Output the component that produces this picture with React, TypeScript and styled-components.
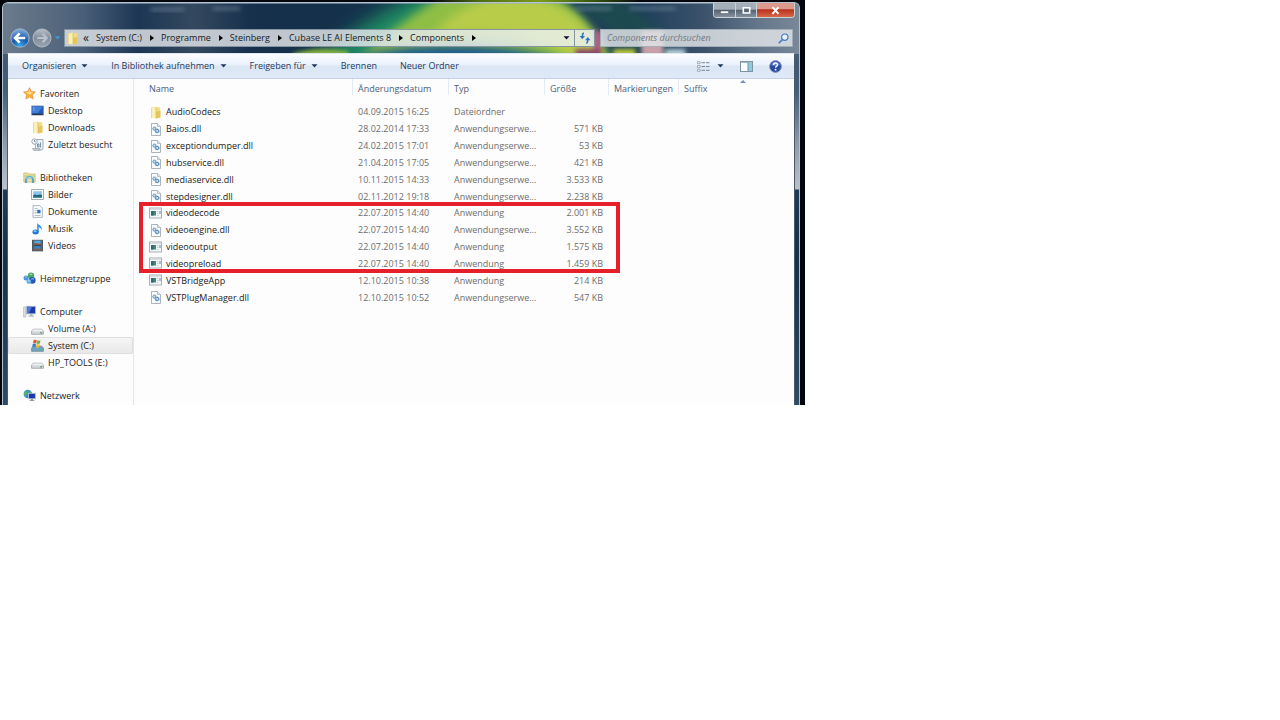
import React from "react";
import styled, { createGlobalStyle, css } from "styled-components";

const GlobalStyle = createGlobalStyle`
  *, *::before, *::after { box-sizing: border-box; }
  body {
    margin: 0;
    background: #fff;
    font-family: "Open Sans", "Noto Sans", sans-serif;
    font-size: 9px;
    line-height: 14px;
    color: #1b1b1b;
  }
  button, input { font: inherit; color: inherit; }
  button { border: 0; padding: 0; background: none; cursor: pointer; }
  svg { display: block; flex: none; }
`;

/* ---------- window frame ---------- */

const Desktop = styled.main`
  width: 100%;
  max-width: 805px;
  padding: 2px 5px 0 2px;
  background: linear-gradient(90deg, #05070c 0 430px, #4d6e12 480px, #7d9a1c 540px, #3c5a10 590px, #05070c 640px) top / 100% 2px no-repeat, #03060c;
`;

const Frame = styled.section`
  position: relative;
  padding: 0 4px;
  border: 1px solid #b4c2cf;
  border-bottom: 0;
  border-radius: 6px 6px 0 0;
  overflow: hidden;
  background: linear-gradient(
    180deg,
    #5d7186 0,
    #3f5975 60px,
    #46607c 90px,
    #8c9aaa 140px,
    #b9c2cc 186px,
    #1d3a58 187px,
    #17304c 260px,
    #2d4c68 403px
  );
`;

const Glass = styled.svg`
  position: absolute;
  top: 0;
  left: 0;
  width: 100%;
  height: 51px;
`;

const TitleBar = styled.header`
  position: relative;
  display: flex;
  justify-content: flex-end;
  align-items: flex-start;
  height: 26px;
`;

const WindowControls = styled.div`
  display: flex;
  border: 1px solid #c9d1d9;
  border-top: 0;
  border-radius: 0 0 4px 4px;
  overflow: hidden;
`;

const ControlButton = styled.button<{ $close?: boolean }>`
  display: grid;
  place-items: center;
  width: ${(p) => (p.$close ? 38 : 21)}px;
  height: 14px;
  background: linear-gradient(#a3aeb9 0 45%, #53616f 50%, #8792a0);
  & + & { border-left: 1px solid #c9d1d9; }
  ${(p) =>
    p.$close &&
    css`
      background: linear-gradient(#dc9a8c 0 42%, #b8321c 48%, #d8694a);
    `}
`;

const NavRow = styled.div`
  position: relative;
  display: flex;
  align-items: center;
  height: 18px;
  margin-bottom: 6px;
  padding: 0 2px 0 3px;
`;

const HistoryButtons = styled.div`
  display: flex;
  align-items: center;
  gap: 2px;
  width: 54px;
`;

const IconButton = styled.button`
  display: grid;
  place-items: center;
`;

const AddressBar = styled.div`
  display: flex;
  flex: 1;
  align-items: center;
  height: 18px;
  margin-right: 5px;
  border: 1px solid #8593a2;
  background: linear-gradient(90deg, rgba(218, 222, 226, 0.86) 30%, rgba(240, 244, 248, 0.8));
`;

const FolderSlot = styled.span`
  width: 18px;
  padding-left: 1px;
`;

const Crumbs = styled.ol`
  display: flex;
  flex: 1;
  align-items: center;
  margin: 0;
  padding: 0;
  list-style: none;
`;

const Crumb = styled.li`
  display: flex;
  align-items: center;
  white-space: nowrap;
`;

const CrumbLink = styled.a`
  color: #17191c;
  text-decoration: none;
`;

const CrumbArrow = styled.svg`
  margin: 0 7px 0 8px;
`;

const Overflow = styled.span`
  width: 13px;
  font-size: 12px;
`;

const AddressAction = styled(IconButton)<{ $divided?: boolean }>`
  width: ${(p) => (p.$divided ? 20 : 16)}px;
  height: 16px;
  ${(p) => p.$divided && "border-left: 1px solid #8593a2;"}
`;

const SearchBox = styled.form`
  display: flex;
  align-items: center;
  width: 193px;
  height: 18px;
  padding: 0 3px 0 6px;
  border: 1px solid #a3aeb8;
  background: rgba(224, 228, 231, 0.84);
`;

const SearchInput = styled.input`
  flex: 1;
  min-width: 0;
  padding: 0;
  border: 0;
  outline: 0;
  background: none;
  font-style: italic;
  &::placeholder { color: #72787e; opacity: 1; }
`;

/* ---------- client area ---------- */

const Client = styled.div`
  position: relative;
  border: 1px solid #4a5a6b;
  border-top-color: #dfe8f0;
  border-bottom: 0;
  background: #fdfdfd;
`;

const Toolbar = styled.div`
  display: flex;
  align-items: center;
  height: 25px;
  padding: 0 12px 0 14px;
  border-bottom: 1px solid #c3cfe2;
  background: linear-gradient(#fbfdff, #eaf1fb 45%, #dbe6f5 50%, #dfe9f7);
  color: #1e395b;
`;

const ToolbarButton = styled.button`
  display: flex;
  align-items: center;
  gap: 5px;
  margin-right: 23px;
  white-space: nowrap;
`;

const ToolbarIcons = styled.div`
  display: flex;
  align-items: center;
  gap: 16px;
  margin-left: auto;
`;

const ViewGroup = styled.div`
  display: flex;
  align-items: center;
  gap: 7px;
`;

const Body = styled.div`
  display: grid;
  grid-template-columns: 126px minmax(0, 1fr);
  min-height: 326px;
`;

const Sidebar = styled.nav`
  display: flex;
  flex-direction: column;
  gap: 16px;
  height: 326px;
  padding-top: 6px;
  border-right: 1px solid #dfe8f2;
  overflow: hidden;
`;

const NavGroup = styled.ul`
  margin: 0;
  padding: 0;
  list-style: none;
`;

const NavLink = styled.a<{ $child?: boolean; $selected?: boolean }>`
  display: flex;
  align-items: center;
  gap: 4px;
  height: 17px;
  padding-left: ${(p) => (p.$child ? 23 : 15)}px;
  color: #1b1b1b;
  text-decoration: none;
  white-space: nowrap;
  ${(p) =>
    p.$selected &&
    css`
      border-radius: 2px;
      background: linear-gradient(#f6f6f6, #e8e8e8);
      box-shadow: inset 0 0 0 1px #dfdfdf;
    `}
`;

const FilePane = styled.div`
  position: relative;
`;

const FileTable = styled.table`
  width: 100%;
  height: 227px;
  table-layout: fixed;
  border-collapse: collapse;
  white-space: nowrap;
`;

const HeadRow = styled.tr`
  height: 25px;
`;

const HeadCell = styled.th`
  position: relative;
  padding: 0;
  vertical-align: top;
  text-align: left;
  font-weight: 400;
  color: #4c607a;
`;

const HeadLabel = styled.span<{ $first?: boolean; $last?: boolean }>`
  display: block;
  height: 16px;
  padding: 3px 0 0 ${(p) => (p.$first ? 15 : 5)}px;
  border-right: ${(p) => (p.$last ? 0 : 1)}px solid #e3eaf2;
`;

const SortMark = styled.svg`
  position: absolute;
  top: 1px;
  left: 61px;
`;

const Cell = styled.td<{ $numeric?: boolean }>`
  padding: 0 ${(p) => (p.$numeric ? 6 : 4)}px 0 5px;
  text-align: ${(p) => (p.$numeric ? "right" : "left")};
  color: #6d6d6d;
`;

const NameCell = styled(Cell)`
  padding-left: 15px;
  color: #1b1b1b;
`;

const FileName = styled.span`
  display: flex;
  align-items: center;
  gap: 4px;
`;

const Highlight = styled.div`
  position: absolute;
  top: 123px;
  left: 5px;
  width: 481px;
  height: 71px;
  border: 4px solid #e6202a;
  pointer-events: none;
`;

/* ---------- icons ---------- */

const Caret = ({ color = "#1e395b" }: { color?: string }) => (
  <svg width="7" height="4" viewBox="0 0 7 4" aria-hidden="true">
    <path d="M.5.200h6L3.500 3.600z" fill={color} />
  </svg>
);

const FolderIcon = () => (
  <svg width="13" height="13" viewBox="0 0 13 13" aria-hidden="true">
    <path d="M2 1.500 6 .5v11L2 12.300z" fill="#efd77e" />
    <path d="M6 1.300h5.200v10.500H5z" fill="#f3dd86" />
    <path d="M2.800 1.800 7 .6v11.900l-4.200-.8z" fill="#fbf0b8" />
    <path d="M7.200 5.800 11.500 4.500v7L7.200 12.500z" fill="#e6c75e" />
    <path d="M7 1v11.500" stroke="#d0b050" strokeWidth=".6" />
  </svg>
);

const DllIcon = () => (
  <svg width="13" height="13" viewBox="0 0 13 13" aria-hidden="true">
    <path d="M2.500.5h6l3 3v9h-9z" fill="#fbfcfd" stroke="#a3abb2" strokeWidth=".9" />
    <path d="M8.500.5v3h3" fill="#e4e8ec" stroke="#a3abb2" strokeWidth=".7" />
    <circle cx="5.400" cy="5.600" r="1.500" fill="#cfe2f2" stroke="#5f95c2" strokeWidth="1.200" strokeDasharray="1 .3" />
    <circle cx="8.200" cy="8" r="1.700" fill="#cfe2f2" stroke="#4b84b8" strokeWidth="1.300" strokeDasharray="1.100 .3" />
  </svg>
);

const ExeIcon = () => (
  <svg width="13" height="13" viewBox="0 0 13 13" aria-hidden="true">
    <rect x=".5" y="1" width="12" height="10" fill="#f4f6f7" stroke="#a0a8af" strokeWidth=".9" />
    <path d="M1 2.200h11" stroke="#cfd6dc" />
    <rect x="2" y="4" width="5" height="4.500" fill="#3f8a78" />
    <path d="M2 4h2.500v4.500H2z" fill="#2d6a78" />
    <path d="M8 4.500h1.500M8 6.500h1.500M8 8.500h1.500" stroke="#b3c0ca" strokeWidth=".8" />
    <path d="M11 4v3" stroke="#4c7598" strokeWidth=".9" />
  </svg>
);

const StarIcon = () => (
  <svg width="13" height="13" viewBox="0 0 13 13" aria-hidden="true">
    <path d="m6.500.7 1.700 3.900 4.200.4-3.200 2.800 1 4.200-3.700-2.200L2.800 12l1-4.200L.6 5l4.200-.4z" fill="#fbb034" stroke="#e08f3a" strokeWidth=".8" />
    <path d="m6.500 2.300 1.200 3 3 .3-4.200 2-3.800-2 2.700-.3z" fill="#ffe08a" />
  </svg>
);

const DesktopIcon = () => (
  <svg width="13" height="13" viewBox="0 0 13 13" aria-hidden="true">
    <rect x=".8" y="2" width="11.500" height="9" fill="#2458b8" stroke="#6e7f96" strokeWidth=".8" />
    <path d="M1.200 2.500h10.600L7 9H1.200z" fill="#3f7fd8" />
    <path d="M1.200 10.300h10.600" stroke="#2a3752" strokeWidth="1.200" />
    <path d="M2 4h1.500M2 6h1.500" stroke="#a9cdf5" strokeWidth=".8" />
  </svg>
);

const RecentIcon = () => (
  <svg width="13" height="13" viewBox="0 0 13 13" aria-hidden="true">
    <path d="M4 1.500h8v8.500c0 1.500-1 2-2 2H3c1 0 1.500-.8 1.500-2z" fill="#eef2f5" stroke="#8c98a3" strokeWidth=".8" />
    <circle cx="3.500" cy="3.500" r="2.700" fill="#f7f9fa" stroke="#8896a3" strokeWidth=".8" />
    <path d="M3.500 2v1.700h1.200M6.500 6H8v3H6.500zM9.500 4.500v5" fill="none" stroke="#5d7c9b" strokeWidth=".8" />
    <path d="M1.500 10.500h7.500v1.700H2.500z" fill="#cbd4dc" stroke="#8c98a3" strokeWidth=".6" />
  </svg>
);

const LibraryIcon = () => (
  <svg width="13" height="13" viewBox="0 0 13 13" aria-hidden="true">
    <path d="M.8 2h4l1 1h6.400v8H.8z" fill="#f3e09a" stroke="#c9b066" strokeWidth=".7" />
    <path d="M1.300 4.300h10.500v2H1.300z" fill="#b5d79c" />
    <path d="M3 12V9a3.500 2.800 0 0 1 7 0v3" fill="none" stroke="#56a5cf" strokeWidth="2.200" />
    <path d="M3.200 8.300A3.200 2.600 0 0 1 9 7.600" fill="none" stroke="#cdeafa" strokeWidth=".8" />
  </svg>
);

const PictureIcon = () => (
  <svg width="13" height="13" viewBox="0 0 13 13" aria-hidden="true">
    <rect x=".6" y="1.600" width="11.800" height="9.800" fill="#fff" stroke="#8a98a6" strokeWidth=".8" />
    <rect x="2.200" y="3.200" width="8.800" height="6.700" fill="#8cc6ea" />
    <path d="M2.200 7.500c2-2 3 0 4.500-.5s2.500-1 4.300 0v2.900H2.200z" fill="#23617a" />
    <path d="M2.200 8.800h8.800v1.100H2.200z" fill="#3f95a5" />
  </svg>
);

const DocumentIcon = () => (
  <svg width="13" height="13" viewBox="0 0 13 13" aria-hidden="true">
    <path d="M2 .6h6.800l2.500 2.500v9.300H2z" fill="#fbfcfe" stroke="#9aa4ae" strokeWidth=".8" />
    <path d="M3.600 3.500h3M3.600 5.500h2M3.600 10.500h6" stroke="#9fb0c2" strokeWidth=".8" />
    <rect x="6.200" y="4.800" width="3.300" height="3.500" fill="#2f6fb8" />
    <path d="M3.600 7.800h2" stroke="#7f93a8" />
  </svg>
);

const MusicIcon = () => (
  <svg width="13" height="13" viewBox="0 0 13 13" aria-hidden="true">
    <path d="M6.200.6c.5 2.700 5.400 3 4.600 7.400-.6-1.600-1.700-2.500-3.100-2.800V10H6.200z" fill="#2d8fe0" />
    <ellipse cx="4.600" cy="9.900" rx="3.200" ry="2.500" fill="#2479d2" />
    <ellipse cx="4.100" cy="9.200" rx="1.500" ry=".9" fill="#8cc8f6" />
  </svg>
);

const VideoIcon = () => (
  <svg width="13" height="13" viewBox="0 0 13 13" aria-hidden="true">
    <rect x="1" y=".8" width="11" height="11.500" fill="#37424d" />
    <rect x="3.200" y="1.500" width="6.600" height="4.500" fill="#5aa6d6" />
    <rect x="3.200" y="7" width="6.600" height="4.500" fill="#3d83b8" />
    <path d="M3.200 4.500c2-1.500 4 1 6.600-.5v2H3.200zM3.200 10c2-1.500 4 1 6.600-.5v2H3.200z" fill="#8a5a44" />
    <path d="M2.100 1.500v10.500M10.900 1.500v10.500" stroke="#b8c2ca" strokeWidth=".9" strokeDasharray="1 1" />
  </svg>
);

const HomegroupIcon = () => (
  <svg width="13" height="13" viewBox="0 0 13 13" aria-hidden="true">
    <circle cx="3" cy="6" r="2.500" fill="#4d94dc" />
    <circle cx="8" cy="3.800" r="3.200" fill="#49a860" />
    <circle cx="9.300" cy="8.400" r="3.300" fill="#2756b5" />
    <circle cx="5.800" cy="9.600" r="2.400" fill="#5fb3e8" />
    <path d="M6.700 2.500a2 1.500 0 0 1 2.500 0M8.300 7.100a2 1.500 0 0 1 2.500 0M2 5h1.500M5 8.800h1.500" stroke="#cfe8fb" strokeWidth=".9" fill="none" />
  </svg>
);

const ComputerIcon = () => (
  <svg width="13" height="13" viewBox="0 0 13 13" aria-hidden="true">
    <path d="M.6 2h2.200v10H.6z" fill="#dde2e7" stroke="#a3acb5" strokeWidth=".6" />
    <rect x="3.500" y="1.300" width="9" height="7.500" fill="#1b38a8" stroke="#b3bdc8" strokeWidth=".9" />
    <path d="M4 1.800h5L6 8.300H4z" fill="#4b79e0" />
    <path d="M7 9h2.500v1.500H11v1.200H5.500v-1.200H7z" fill="#b3bdc6" />
  </svg>
);

const DriveShape = () => (
  <>
    <path d="M2.200 7.200h8.600l1.600 2v3.100H.6V9.200z" fill="#d3d7db" stroke="#8d959c" strokeWidth=".7" />
    <path d="M2.200 7.500h8.600l1.200 1.700H1z" fill="#f1f3f4" />
    <path d="M9.200 10.800h1.900" stroke="#35a64b" strokeWidth="1.200" />
  </>
);

const DriveIcon = () => (
  <svg width="13" height="13" viewBox="0 0 13 13" aria-hidden="true">
    <DriveShape />
  </svg>
);

const SystemDriveIcon = () => (
  <svg width="13" height="13" viewBox="0 0 13 13" aria-hidden="true">
    <path d="M2.200 7.200h8.600l1.600 2v3.100H.6V9.200z" fill="#6fa3c0" stroke="#5f7f94" strokeWidth=".7" />
    <path d="M9 10.800h2" stroke="#4cc060" strokeWidth="1.200" />
    <path d="M2.600 1.200c1.200-.8 2.200-.6 3.200 0l-.7 3.200c-1-.6-2-.7-3.200 0z" fill="#e2572b" />
    <path d="M6.300 1.300c1 .6 2 .6 3.200 0l-.7 3.200c-1.200.6-2.200.5-3.200 0z" fill="#6fb13c" />
    <path d="M1.800 5c1.200-.8 2.200-.6 3.200 0l-.7 3.200c-1-.6-2-.7-3.200 0z" fill="#2f7fd0" />
    <path d="M5.500 5.100c1 .6 2 .6 3.200 0L8 8.300c-1.200.6-2.200.5-3.200 0z" fill="#f2bb2e" />
  </svg>
);

const NetworkIcon = () => (
  <svg width="13" height="13" viewBox="0 0 13 13" aria-hidden="true">
    <circle cx="4.800" cy="5" r="4.200" fill="#2f8fd6" />
    <path d="M2 2.500c2-1.500 3.500 0 2.500 1.500S2.500 6 3 8C1 7 .3 4.500 2 2.500zM6 1.500c1.500.5 2.500 1.500 2.700 3L7 4z" fill="#53b464" />
    <rect x="5.500" y="4.300" width="6.900" height="5.500" fill="#1b38b0" stroke="#b7c2ce" strokeWidth=".9" />
    <path d="M8 10h2v1h1.300v1H6.700v-1H8z" fill="#8f9ba7" />
  </svg>
);

const BackIcon = () => (
  <svg width="20" height="20" viewBox="0 0 20 20" aria-hidden="true">
    <defs>
      <radialGradient id="backFill" cx=".5" cy=".95" r=".9">
        <stop offset="0" stopColor="#35b0ee" />
        <stop offset=".5" stopColor="#1757b0" />
        <stop offset="1" stopColor="#7ea8da" />
      </radialGradient>
    </defs>
    <circle cx="10" cy="10" r="9.200" fill="url(#backFill)" stroke="#9fb2c6" />
    <path d="M9.700 5.300 5 10l4.700 4.700M5.500 10h9.700" fill="none" stroke="#fff" strokeWidth="2.600" />
  </svg>
);

const ForwardIcon = () => (
  <svg width="20" height="20" viewBox="0 0 20 20" aria-hidden="true">
    <defs>
      <linearGradient id="forwardFill" x2="0" y2="1">
        <stop offset="0" stopColor="#b7c0c9" />
        <stop offset=".5" stopColor="#838e9a" />
        <stop offset="1" stopColor="#9aa5b0" />
      </linearGradient>
    </defs>
    <circle cx="10" cy="10" r="9" fill="url(#forwardFill)" stroke="#b3bdc7" />
    <path d="m10.500 5.800 4.200 4.200-4.200 4.200M14 10H5.200" fill="none" stroke="#bac3cb" strokeWidth="2.200" />
  </svg>
);

const RefreshIcon = () => (
  <svg width="12" height="12" viewBox="0 0 12 12" aria-hidden="true">
    <path d="M4.800 1C3.300 1.500 3.300 3 3.300 5" fill="none" stroke="#2c6fc4" strokeWidth="1.500" />
    <path d="M.6 3.900h5.400L3.300 7.300z" fill="#2c6fc4" />
    <path d="M7.300 11.200C8.800 10.700 8.800 9.200 8.800 7.200" fill="none" stroke="#2c6fc4" strokeWidth="1.500" />
    <path d="M6.100 8.300h5.400L8.800 4.900z" fill="#2c6fc4" />
  </svg>
);

const SearchIcon = () => (
  <svg width="11" height="11" viewBox="0 0 11 11" aria-hidden="true">
    <circle cx="6.800" cy="4.200" r="3.200" fill="#e6f1fa" stroke="#3f7cc0" strokeWidth="1.200" />
    <path d="M4.500 6.500 1.200 9.800" stroke="#3f7cc0" strokeWidth="1.600" strokeLinecap="round" />
  </svg>
);

const ViewIcon = () => (
  <svg width="13" height="11" viewBox="0 0 13 11" aria-hidden="true">
    <path d="M.5.7h2.600v2H.5zM.5 4.500h2.600v2H.5zM.5 8.300h2.600v2H.5z" fill="#fff" stroke="#8b98a6" strokeWidth=".8" />
    <path d="M4.500 1.700h3.500M9 1.700h3.500M4.500 5.500h3.500M9 5.500h3.500M4.500 9.300h3.500M9 9.300h3.500" stroke="#75879a" />
  </svg>
);

const PaneIcon = () => (
  <svg width="13" height="11" viewBox="0 0 13 11" aria-hidden="true">
    <rect x=".5" y=".5" width="12" height="10" fill="#fff" stroke="#7f93a5" />
    <path d="M1 1.400h11" stroke="#9fb3c4" />
    <rect x="8.200" y="2" width="3.800" height="8" fill="#8fcbe0" />
    <path d="M8 1.500v9" stroke="#4f88a3" strokeWidth=".9" />
  </svg>
);

const HelpIcon = () => (
  <svg width="13" height="13" viewBox="0 0 13 13" aria-hidden="true">
    <circle cx="6.500" cy="6.500" r="5.900" fill="#2a49a4" stroke="#8c9ab3" />
    <path d="M2 5a4.700 4.700 0 0 1 9 0c-3 1.500-6 1.500-9 0z" fill="#5f80cf" />
    <path d="M4.600 5c0-2.600 3.900-2.600 3.900-.2 0 1.400-1.900 1.400-1.900 2.900" fill="none" stroke="#fff" strokeWidth="1.400" />
    <circle cx="6.600" cy="9.700" r=".9" fill="#fff" />
  </svg>
);

const GlassBackdrop = () => (
  <Glass viewBox="0 0 798 51" preserveAspectRatio="none" aria-hidden="true">
    <defs>
      <filter id="soft" x="-20%" y="-50%" width="140%" height="200%">
        <feGaussianBlur stdDeviation="9" />
      </filter>
      <filter id="medium" x="-20%" y="-50%" width="140%" height="200%">
        <feGaussianBlur stdDeviation="5" />
      </filter>
      <filter id="fine" x="-20%" y="-50%" width="140%" height="200%">
        <feGaussianBlur stdDeviation="2" />
      </filter>
      <linearGradient id="base">
        <stop offset="0" stopColor="#6c7b8c" />
        <stop offset=".1" stopColor="#4a5f78" />
        <stop offset=".17" stopColor="#1c3654" />
        <stop offset=".24" stopColor="#34495f" />
        <stop offset=".31" stopColor="#17304d" />
        <stop offset=".4" stopColor="#14304a" />
        <stop offset=".8" stopColor="#1f3f5c" />
        <stop offset=".88" stopColor="#3b526a" />
        <stop offset=".94" stopColor="#5f7388" />
        <stop offset="1" stopColor="#7a8898" />
      </linearGradient>
    </defs>
    <rect width="798" height="51" fill="url(#base)" />
    <path d="M310 62C350 25 390 2 440-20h110l50 90z" fill="#1f8a62" filter="url(#soft)" />
    <path d="M350 62C390 25 420 5 460-20h70c40 14 64 45 84 84z" fill="#8fbe44" filter="url(#medium)" />
    <path d="M430 34C450 8 480-8 520-6s66 26 82 58h-40C540 34 480 22 430 34z" fill="#b8cc4a" filter="url(#medium)" />
    <path d="M548-12h50c36 14 60 34 76 62h-48C612 26 586 8 548-12z" fill="#1d4a50" filter="url(#medium)" />
    <path d="M340 60c40-22 170-26 226 0z" fill="#1c5c8c" filter="url(#medium)" />
    <path d="M290 51c16-6 34-6 56-3v8h-56z" fill="#86b43c" filter="url(#fine)" />
    <g filter="url(#fine)">
      <rect x="592" y="28" width="8" height="18" fill="#b05c86" />
      <path d="M574 46h26v8h-26z" fill="#8c4a66" />
      <rect x="612" y="46" width="22" height="8" fill="#b8c83a" />
      <rect x="640" y="28" width="22" height="26" fill="#c9a0a8" />
      <rect x="664" y="46" width="20" height="8" fill="#b4ced6" />
    </g>
    <path d="M148 5h34v3h-34zM210 4h28v3h-28zM574 4h36v3h-36zM628 4h46v3h-46z" fill="#8ea1b4" fillOpacity=".5" filter="url(#fine)" />
    <path d="M0 .5h798" stroke="#9db0c0" strokeOpacity=".6" />
  </Glass>
);

/* ---------- data ---------- */

const crumbs = ["System (C:)", "Programme", "Steinberg", "Cubase LE AI Elements 8", "Components"];

const commands = [
  { label: "Organisieren", menu: true },
  { label: "In Bibliothek aufnehmen", menu: true },
  { label: "Freigeben für", menu: true },
  { label: "Brennen", menu: false },
  { label: "Neuer Ordner", menu: false },
];

type Icon = () => React.JSX.Element;

const places: { label: string; icon: Icon; selected?: boolean }[][] = [
  [
    { label: "Favoriten", icon: StarIcon },
    { label: "Desktop", icon: DesktopIcon },
    { label: "Downloads", icon: FolderIcon },
    { label: "Zuletzt besucht", icon: RecentIcon },
  ],
  [
    { label: "Bibliotheken", icon: LibraryIcon },
    { label: "Bilder", icon: PictureIcon },
    { label: "Dokumente", icon: DocumentIcon },
    { label: "Musik", icon: MusicIcon },
    { label: "Videos", icon: VideoIcon },
  ],
  [{ label: "Heimnetzgruppe", icon: HomegroupIcon }],
  [
    { label: "Computer", icon: ComputerIcon },
    { label: "Volume (A:)", icon: DriveIcon },
    { label: "System (C:)", icon: SystemDriveIcon, selected: true },
    { label: "HP_TOOLS (E:)", icon: DriveIcon },
  ],
  [{ label: "Netzwerk", icon: NetworkIcon }],
];

const columns = ["Name", "Änderungsdatum", "Typ", "Größe", "Markierungen", "Suffix"];

type Kind = "folder" | "dll" | "exe";

const kinds: Record<Kind, { icon: Icon; type: string }> = {
  folder: { icon: FolderIcon, type: "Dateiordner" },
  dll: { icon: DllIcon, type: "Anwendungserwe..." },
  exe: { icon: ExeIcon, type: "Anwendung" },
};

const files: [string, string, Kind, string][] = [
  ["AudioCodecs", "04.09.2015 16:25", "folder", ""],
  ["Baios.dll", "28.02.2014 17:33", "dll", "571 KB"],
  ["exceptiondumper.dll", "24.02.2015 17:01", "dll", "53 KB"],
  ["hubservice.dll", "21.04.2015 17:05", "dll", "421 KB"],
  ["mediaservice.dll", "10.11.2015 14:33", "dll", "3.533 KB"],
  ["stepdesigner.dll", "02.11.2012 19:18", "dll", "2.238 KB"],
  ["videodecode", "22.07.2015 14:40", "exe", "2.001 KB"],
  ["videoengine.dll", "22.07.2015 14:40", "dll", "3.552 KB"],
  ["videooutput", "22.07.2015 14:40", "exe", "1.575 KB"],
  ["videopreload", "22.07.2015 14:40", "exe", "1.459 KB"],
  ["VSTBridgeApp", "12.10.2015 10:38", "exe", "214 KB"],
  ["VSTPlugManager.dll", "12.10.2015 10:52", "dll", "547 KB"],
];

/* ---------- page ---------- */

export default function App() {
  return (
    <>
      <GlobalStyle />
      <Desktop>
        <Frame>
          <GlassBackdrop />
          <TitleBar>
            <WindowControls>
              <ControlButton aria-label="Minimieren">
                <svg width="9" height="9" viewBox="0 0 9 9" aria-hidden="true">
                  <rect x=".5" y="5" width="8" height="2.500" fill="#fff" stroke="#4b5662" strokeWidth=".5" />
                </svg>
              </ControlButton>
              <ControlButton aria-label="Maximieren">
                <svg width="9" height="9" viewBox="0 0 9 9" aria-hidden="true">
                  <rect x="1.300" y="1.800" width="6.400" height="5.200" fill="#5a6672" stroke="#fff" strokeWidth="1.600" />
                </svg>
              </ControlButton>
              <ControlButton $close aria-label="Schließen">
                <svg width="9" height="9" viewBox="0 0 9 9" aria-hidden="true">
                  <path d="m1.500 1.200 6 6.600m0-6.600-6 6.600" stroke="#fff" strokeWidth="2" />
                </svg>
              </ControlButton>
            </WindowControls>
          </TitleBar>
          <NavRow>
            <HistoryButtons>
              <IconButton aria-label="Zurück">
                <BackIcon />
              </IconButton>
              <IconButton aria-label="Vorwärts">
                <ForwardIcon />
              </IconButton>
              <IconButton aria-label="Verlauf">
                <Caret color="#3c9bd8" />
              </IconButton>
            </HistoryButtons>
            <AddressBar>
              <FolderSlot>
                <FolderIcon />
              </FolderSlot>
              <Overflow>«</Overflow>
              <Crumbs>
                {crumbs.map((crumb) => (
                  <Crumb key={crumb}>
                    <CrumbLink href="#">{crumb}</CrumbLink>
                    <CrumbArrow width="4" height="6" viewBox="0 0 4 6" aria-hidden="true">
                      <path d="M0 0v6l4-3z" fill="#000" />
                    </CrumbArrow>
                  </Crumb>
                ))}
              </Crumbs>
              <AddressAction aria-label="Vorherige Orte">
                <Caret color="#10103c" />
              </AddressAction>
              <AddressAction $divided aria-label="Aktualisieren">
                <RefreshIcon />
              </AddressAction>
            </AddressBar>
            <SearchBox role="search">
              <SearchInput type="text" aria-label="Components durchsuchen" placeholder="Components durchsuchen" />
              <SearchIcon />
            </SearchBox>
          </NavRow>
          <Client>
            <Toolbar>
              {commands.map(({ label, menu }) => (
                <ToolbarButton key={label}>
                  {label}
                  {menu && <Caret />}
                </ToolbarButton>
              ))}
              <ToolbarIcons>
                <ViewGroup>
                  <IconButton aria-label="Ansicht ändern">
                    <ViewIcon />
                  </IconButton>
                  <IconButton aria-label="Weitere Optionen">
                    <Caret />
                  </IconButton>
                </ViewGroup>
                <IconButton aria-label="Vorschaufenster">
                  <PaneIcon />
                </IconButton>
                <IconButton aria-label="Hilfe">
                  <HelpIcon />
                </IconButton>
              </ToolbarIcons>
            </Toolbar>
            <Body>
              <Sidebar aria-label="Navigationsbereich">
                {places.map((group) => (
                  <NavGroup key={group[0].label}>
                    {group.map(({ label, icon: PlaceIcon, selected }, i) => (
                      <li key={label}>
                        <NavLink href="#" $child={i > 0} $selected={selected}>
                          <PlaceIcon />
                          {label}
                        </NavLink>
                      </li>
                    ))}
                  </NavGroup>
                ))}
              </Sidebar>
              <FilePane>
                <FileTable>
                  <colgroup>
                    <col width="219" />
                    <col width="96" />
                    <col width="96" />
                    <col width="64" />
                    <col width="70" />
                    <col />
                  </colgroup>
                  <thead>
                    <HeadRow>
                      {columns.map((column, i) => (
                        <HeadCell key={column} scope="col">
                          <HeadLabel $first={i === 0} $last={i === columns.length - 1}>
                            {column}
                          </HeadLabel>
                          {i === columns.length - 1 && (
                            <SortMark width="6" height="3" viewBox="0 0 6 3" aria-hidden="true">
                              <path d="M0 3h6L3 0z" fill="#6f93b5" />
                            </SortMark>
                          )}
                        </HeadCell>
                      ))}
                    </HeadRow>
                  </thead>
                  <tbody>
                    {files.map(([name, date, kind, size]) => {
                      const { icon: FileIcon, type } = kinds[kind];
                      return (
                        <tr key={name}>
                          <NameCell>
                            <FileName>
                              <FileIcon />
                              {name}
                            </FileName>
                          </NameCell>
                          <Cell>{date}</Cell>
                          <Cell>{type}</Cell>
                          <Cell $numeric>{size}</Cell>
                          <Cell />
                          <Cell />
                        </tr>
                      );
                    })}
                  </tbody>
                </FileTable>
                <Highlight />
              </FilePane>
            </Body>
          </Client>
        </Frame>
      </Desktop>
    </>
  );
}
